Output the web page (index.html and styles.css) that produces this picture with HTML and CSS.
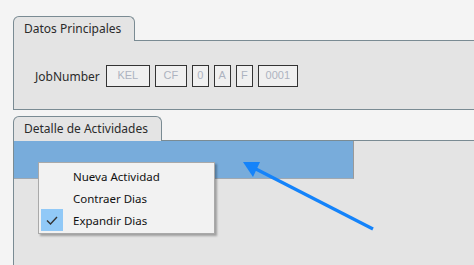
FILE: index.html
```html
<!DOCTYPE html>
<html lang="es">
<head>
    <meta charset="UTF-8">
    <title>Actividades</title>
    <link rel="stylesheet" href="styles.css">
</head>
<body>
    <div class="group group-main">
        <div class="tab">Datos Principales</div>
        <div class="panel">
            <div class="job-row">
                <span class="job-label">JobNumber</span>
                <span class="field w-kel">KEL</span>
                <span class="field w-cf">CF</span>
                <span class="field w-one">0</span>
                <span class="field w-one">A</span>
                <span class="field w-one">F</span>
                <span class="field w-num">0001</span>
            </div>
        </div>
    </div>

    <div class="group group-detail">
        <div class="tab">Detalle de Actividades</div>
        <div class="panel panel-detail">
            <div class="bar"></div>
        </div>
    </div>

    <ul class="menu">
        <li class="menu-item"><span class="check"></span>Nueva Actividad</li>
        <li class="menu-item"><span class="check"></span>Contraer Dias</li>
        <li class="menu-item"><span class="check checked">
            <svg width="22" height="22" viewBox="0 0 22 22"><path d="M6 11.5 L9.5 15 L16 8" fill="none" stroke="#333" stroke-width="1.4"/></svg>
        </span>Expandir Dias</li>
    </ul>

    <svg class="arrow" width="474" height="265" viewBox="0 0 474 265">
        <line x1="373" y1="229" x2="252" y2="167" stroke="#1483fa" stroke-width="3.2"/>
        <polygon points="243,162 260,162 253,177" fill="#1483fa"/>
    </svg>
</body>
</html>
```

FILE: styles.css
```css
html, body {
    height: 100%;
}

body {
    margin: 0;
    padding: 16px 0 0 13px;
    box-sizing: border-box;
    background-color: #f4f4f4;
    font-family: "Noto Sans", "DejaVu Sans", sans-serif;
    font-size: 12px;
    color: #2b2b2b;
    overflow: hidden;
    position: relative;
    display: flex;
    flex-direction: column;
}

.group {
    display: flex;
    flex-direction: column;
    align-items: flex-start;
}

.group-detail {
    margin-top: 6px;
    flex: 1;
}

.tab {
    position: relative;
    z-index: 1;
    height: 24px;
    line-height: 23px;
    padding: 0 13px 0 10px;
    margin-bottom: -1px;
    background-color: #e4e4e4;
    border: 1px solid #7a8b93;
    border-bottom: none;
    border-radius: 6px 6px 0 0;
}

.panel {
    align-self: stretch;
    height: 68px;
    background-color: #e4e4e4;
    border: 1px solid #7a8b93;
    border-right: none;
    display: flex;
    align-items: center;
}

.panel-detail {
    flex: 1;
    height: auto;
    border-bottom: none;
    align-items: flex-start;
}

.job-row {
    display: flex;
    align-items: center;
    padding-left: 21px;
    padding-top: 2px;
}

.job-label {
    margin-right: 6px;
}

.field {
    box-sizing: border-box;
    height: 22px;
    line-height: 19px;
    margin-right: 5px;
    text-align: center;
    border: 1px solid #333;
    background-color: #f0f0f0;
    color: #adb3c0;
    font-family: "Liberation Sans", Arial, sans-serif;
    font-size: 11px;
}

.w-kel { width: 44px; }
.w-cf { width: 32px; }
.w-one { width: 17px; }
.w-num { width: 40px; }

.bar {
    width: 339px;
    height: 37px;
    background-color: #78acdb;
    border-right: 1px solid #9a9a9a;
    border-bottom: 1px solid #a0a8b0;
}

.menu {
    position: absolute;
    left: 38px;
    top: 162px;
    width: 177px;
    margin: 0;
    padding: 2px 0;
    list-style: none;
    box-sizing: border-box;
    background-color: #f2f2f2;
    border: 1px solid #a9a9a9;
    box-shadow: 2px 2px 2px rgba(0, 0, 0, 0.3);
    font-family: "Noto Sans", "DejaVu Sans", sans-serif;
    font-size: 11.5px;
    color: #111;
}

.menu-item {
    display: flex;
    align-items: center;
    height: 22px;
    padding-left: 2px;
}

.check {
    width: 22px;
    height: 22px;
    margin-right: 10px;
}

.check.checked {
    background-color: #91c9f7;
}

.check svg {
    display: block;
}

.arrow {
    position: absolute;
    left: 0;
    top: 0;
    pointer-events: none;
}
```
